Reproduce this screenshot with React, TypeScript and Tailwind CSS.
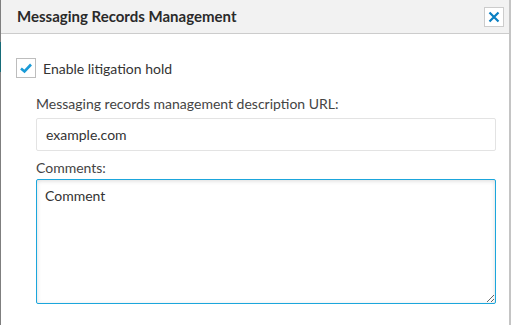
import React from "react";

export default function App() {
  return (
    <div className="w-[511px] h-[325px] flex bg-white" style={{ fontFamily: "Lato, 'Noto Sans', sans-serif" }}>
      <div className="w-[1px] flex flex-col bg-[#7f7f7f]">
        <div className="h-[42px]" />
        <div className="h-[30px] bg-[#166b78]" />
      </div>
      <div className="flex-1 flex flex-col bg-white">
        <div className="h-[34px] shrink-0 flex items-center justify-between pl-[16px] pr-[5px] bg-[#f2f2f2] border-b border-[#cccccc]">
          <span className="text-[15px] font-bold text-[#2a2a2a]">Messaging Records Management</span>
          <button className="w-[20px] h-[20px] bg-white border border-[#cccccc] flex items-center justify-center">
            <svg width="12" height="12" viewBox="0 0 12 12">
              <path d="M1.5 1.5 L10.5 10.5 M10.5 1.5 L1.5 10.5" stroke="#0a7fc2" strokeWidth="2.2" />
            </svg>
          </button>
        </div>
        <div className="flex-1 flex flex-col pl-[15px] pr-[13px] pt-[23px]">
          <div className="flex items-center gap-[7px]">
            <div className="w-[20px] h-[20px] border border-[#bdbdbd] bg-white flex items-center justify-center">
              <svg width="14" height="12" viewBox="0 0 14 12">
                <path d="M2 6.5 L5.5 9.5 L12 2.5" stroke="#1a9bd7" strokeWidth="2.6" fill="none" />
              </svg>
            </div>
            <span className="text-[14px] text-[#333333] translate-y-[1px]">Enable litigation hold</span>
          </div>
          <div className="pl-[20px] pt-[16px] flex flex-col">
            <span className="text-[14px] text-[#444444] leading-[20px]">Messaging records management description URL:</span>
            <div className="mt-[4px] h-[33px] border border-[#e3e3e3] rounded-[2px] flex items-center px-[9px] text-[14px] text-[#333333]">
              example.com
            </div>
            <span className="mt-[7px] text-[14px] text-[#444444] leading-[20px]">Comments:</span>
            <textarea
              className="mt-[1px] h-[125px] resize-y border border-[#1ba6dc] rounded-[2px] px-[8px] py-[5px] text-[14px] text-[#333333] outline-none shadow-[inset_0_1px_4px_rgba(0,0,0,0.15)]"
              style={{ fontFamily: "Lato, 'Noto Sans', sans-serif" }}
              defaultValue="Comment"
            />
          </div>
        </div>
      </div>
      <div className="w-[2px] bg-[#c4c4c4]" />
    </div>
  );
}
